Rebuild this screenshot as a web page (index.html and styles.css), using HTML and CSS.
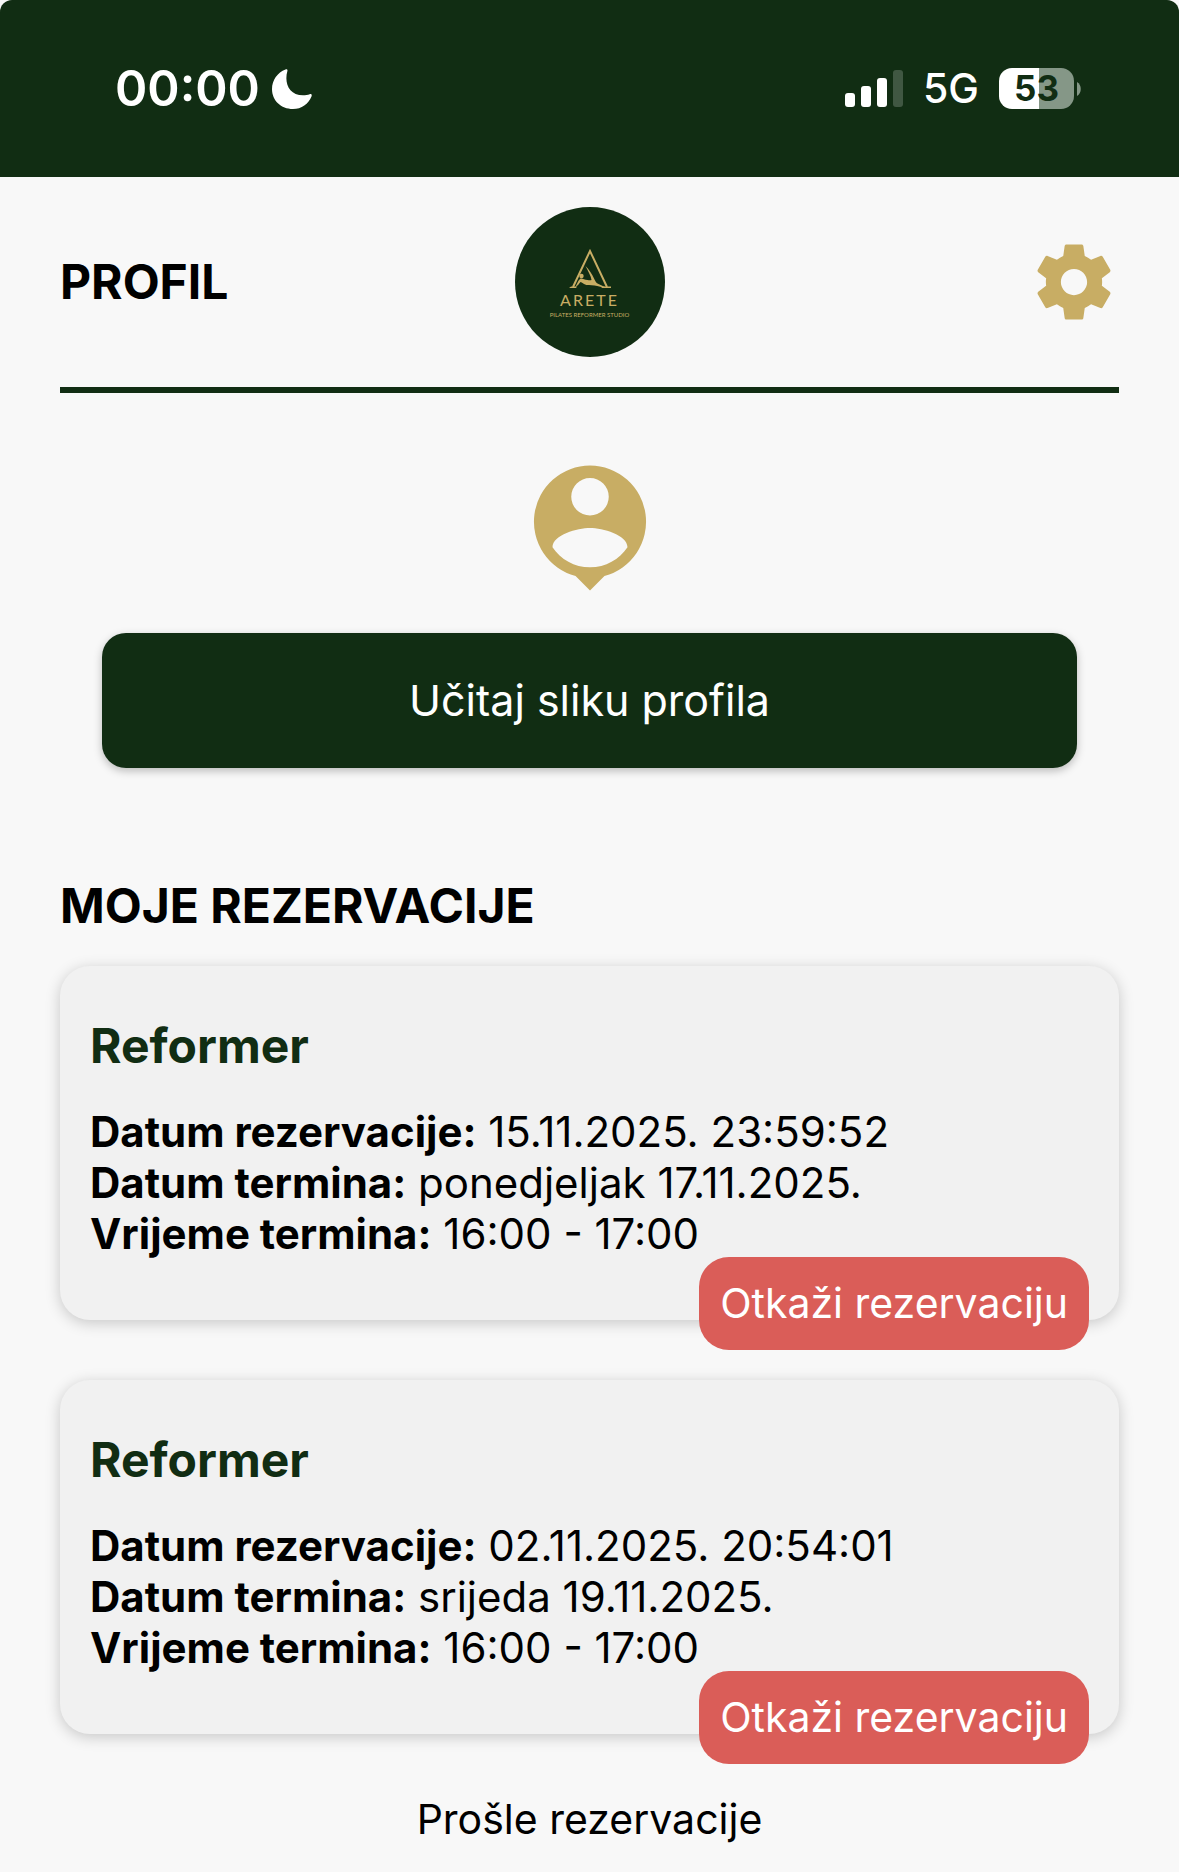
FILE: index.html
```
<!DOCTYPE html>
<html lang="hr">
<head>
    <meta charset="UTF-8">
    <meta name="viewport" content="width=device-width, initial-scale=1.0">
    <title>Profil</title>
    <link rel="stylesheet" href="styles.css">
</head>
<body>
    <div class="status-bar">
        <div class="status-left">
            <span class="time">00:00</span>
            <svg class="moon" viewBox="0 0 40 40">
                <path d="M13.5 .4c1.300-.600 2.300.2 1.900 1.600C12 14 17 26 31 26.300c2.600 0 4.700-.500 6.700-1.100 1.500-.400 2.400.6 1.900 2C36.500 35 29.500 40 21 40 9 40 0 31.500 0 20 0 11 5.500 3.500 13.500 .4z"/>
            </svg>
        </div>
        <div class="status-right">
            <svg class="signal" viewBox="0 0 58 38">
                <rect x="0" y="23" width="10" height="14" rx="3"/>
                <rect x="16" y="16" width="10" height="21" rx="3"/>
                <rect x="32" y="8" width="10" height="29" rx="3"/>
                <rect class="signal-off" x="48" y="0" width="10" height="37" rx="3"/>
            </svg>
            <span class="network">5G</span>
            <div class="battery">
                <span class="battery-level">53</span>
                <svg class="battery-tip" viewBox="0 0 4 14"><path d="M0 0c5 2.500 5 11.500 0 14z"/></svg>
            </div>
        </div>
    </div>

    <div class="page">
        <header class="header">
            <h1 class="title">PROFIL</h1>
            <div class="logo">
                <svg class="logo-mark" viewBox="0 0 42 40">
                    <path class="logo-line" d="M4 39L21 3l17 36"/>
                    <path d="M0 40l2-1.500h6l-1 1.500zM32 40l2-1.500h8V40z"/>
                    <circle cx="12.500" cy="28" r="2.200"/>
                    <path d="M6 39c2-2 2.500-6 5.500-8.500 1.500-.500 4 1 7 1.500 1.800.3 3 .3 4 0-.500-4-3.500-9-6-14 3.500 3.500 6.500 8 9 13.500 1 2 1.500 3.200 3.500 4.200L38 40c-5-.500-9-2-12.500-2.500-4-.5-7.500.3-10.500-1.500-1.500-1-2.500-2-3.500-2-1.500 1.500-2.500 4.200-5.500 5z"/>
                </svg>
                <span class="logo-name">ARETE</span>
                <span class="logo-sub">PILATES REFORMER STUDIO</span>
            </div>
            <button class="settings" aria-label="Postavke">
                <svg class="settings-icon" viewBox="0 0 24 24">
                    <path d="M19.430 12.980c.04-.32.07-.64.07-.98s-.03-.66-.07-.98l2.110-1.650c.19-.15.24-.42.12-.64l-2-3.460c-.12-.22-.39-.3-.61-.22l-2.490 1c-.52-.4-1.080-.73-1.690-.98l-.38-2.650C14.460 2.180 14.250 2 14 2h-4c-.25 0-.46.18-.49.42l-.38 2.650c-.61.25-1.170.59-1.690.98l-2.490-1c-.23-.09-.49 0-.61.22l-2 3.460c-.13.22-.07.49.12.64l2.110 1.650c-.04.32-.07.65-.07.98s.03.66.07.98l-2.110 1.650c-.19.15-.24.42-.12.64l2 3.460c.12.22.39.3.61.22l2.490-1c.52.4 1.080.73 1.690.98l.38 2.650c.03.24.24.42.49.42h4c.25 0 .46-.18.49-.42l.38-2.650c.61-.25 1.170-.59 1.690-.98l2.490 1c.23.09.49 0 .61-.22l2-3.460c.12-.22.07-.49-.12-.64l-2.110-1.650zM12 15.500c-1.930 0-3.500-1.570-3.500-3.500s1.570-3.500 3.500-3.500 3.500 1.570 3.500 3.500-1.570 3.500-3.500 3.500z"/>
                </svg>
            </button>
        </header>

        <section class="upload">
            <svg class="avatar" viewBox="0 0 24 24">
                <path fill-rule="evenodd" d="M12 2a9 9 0 0 0-2.310 17.690L12 22l2.310-2.310A9 9 0 0 0 12 2zm0 2a3 3 0 1 1 0 6 3 3 0 0 1 0-6zm0 14.300c-2.500 0-4.710-1.280-6-3.220.03-1.990 4-3.080 6-3.080s5.970 1.090 6 3.080c-1.290 1.940-3.500 3.220-6 3.220z"/>
            </svg>
            <button class="upload-button">Učitaj sliku profila</button>
        </section>

        <h2 class="title">MOJE REZERVACIJE</h2>

        <div class="card">
            <h3 class="card-title">Reformer</h3>
            <p><b>Datum rezervacije:</b> 15.11.2025. 23:59:52</p>
            <p><b>Datum termina:</b> ponedjeljak 17.11.2025.</p>
            <p><b>Vrijeme termina:</b> 16:00 - 17:00</p>
            <button class="cancel">Otkaži rezervaciju</button>
        </div>

        <div class="card">
            <h3 class="card-title">Reformer</h3>
            <p><b>Datum rezervacije:</b> 02.11.2025. 20:54:01</p>
            <p><b>Datum termina:</b> srijeda 19.11.2025.</p>
            <p><b>Vrijeme termina:</b> 16:00 - 17:00</p>
            <button class="cancel">Otkaži rezervaciju</button>
        </div>

        <button class="past">Prošle rezervacije</button>
    </div>
</body>
</html>
```
FILE: styles.css
```
* {
    box-sizing: border-box;
}
body {
    margin: 0;
    background: #f8f8f8;
    color: #000;
    font-family: Inter, "Liberation Sans", sans-serif;
    font-size: 42px;
    line-height: 51px;
}
h1, h2, h3, p {
    margin: 0;
}
button {
    border: none;
    padding: 0;
    font: inherit;
    color: inherit;
    background: none;
    cursor: pointer;
}
svg {
    display: block;
}

/* Status bar */
.status-bar {
    display: flex;
    justify-content: space-between;
    align-items: center;
    height: 177px;
    padding: 0 98px 0 115px;
    background: #112d13;
    border-radius: 12px 12px 0 0;
    color: #fff;
    fill: #fff;
}
.status-left, .status-right {
    display: flex;
    align-items: center;
}
.status-left {
    gap: 12px;
}
.status-right {
    gap: 20px;
}
.time {
    font-size: 49px;
    font-weight: 600;
}
.moon {
    width: 40px;
    height: 40px;
}
.signal {
    width: 58px;
    height: 38px;
}
.signal-off {
    opacity: 0.2;
}
.network {
    font-size: 41px;
    font-weight: 500;
}
.battery {
    display: flex;
    align-items: center;
    gap: 3px;
}
.battery-level {
    width: 75px;
    height: 41px;
    border-radius: 13px;
    background: linear-gradient(to right, #fff 53%, #859787 53%);
    color: #112d13;
    font-size: 35px;
    font-weight: 700;
    line-height: 41px;
    text-align: center;
}
.battery-tip {
    width: 4px;
    height: 14px;
    fill: #859787;
}

/* Header */
.page {
    padding: 0 60px 24px;
}
.header {
    display: grid;
    grid-template-columns: 1fr auto 1fr;
    align-items: center;
    padding: 30px 0;
    border-bottom: 6px solid #112d13;
}
.title {
    font-size: 48px;
    font-weight: 700;
    line-height: 60px;
}
.logo {
    display: flex;
    flex-direction: column;
    align-items: center;
    width: 150px;
    height: 150px;
    padding-top: 41px;
    border-radius: 50%;
    background: #112d13;
    color: #c8ad64;
    fill: #c8ad64;
    font-family: Lato, sans-serif;
}
.logo-mark {
    width: 42px;
    height: 40px;
}
.logo-line {
    fill: none;
    stroke: #c8ad64;
    stroke-width: 2;
}
.logo-name {
    margin-top: 3px;
    font-size: 16px;
    line-height: 18px;
    letter-spacing: 2px;
}
.logo-sub {
    font-size: 6px;
    line-height: 12px;
    white-space: nowrap;
}
.settings {
    justify-self: end;
}
.settings-icon {
    width: 90px;
    height: 90px;
    fill: #c8ad64;
}

/* Profile picture */
.upload {
    display: flex;
    flex-direction: column;
    gap: 30px;
    padding: 60px 42px 108px;
}
.avatar {
    align-self: center;
    width: 150px;
    height: 150px;
    fill: #c8ad64;
}
.upload-button {
    height: 135px;
    border-radius: 24px;
    background: #112d13;
    box-shadow: 0 3px 9px rgba(0, 0, 0, 0.25);
    color: #fff;
    font-size: 43px;
}

/* Reservations */
.card {
    position: relative;
    margin: 30px 0 60px;
    padding: 50px 30px 61px;
    border-radius: 30px;
    background: #f1f1f1;
    box-shadow: 0 3px 15px rgba(0, 0, 0, 0.2);
}
.card-title {
    margin-bottom: 30px;
    color: #112d13;
    font-size: 48px;
    font-weight: 700;
    line-height: 60px;
}
.cancel {
    position: absolute;
    right: 30px;
    bottom: -30px;
    padding: 21px;
    border-radius: 30px;
    background: #da5d58;
    color: #fff;
    font-size: 41px;
}
.past {
    display: block;
    margin: 0 auto;
    font-size: 41px;
}
```
